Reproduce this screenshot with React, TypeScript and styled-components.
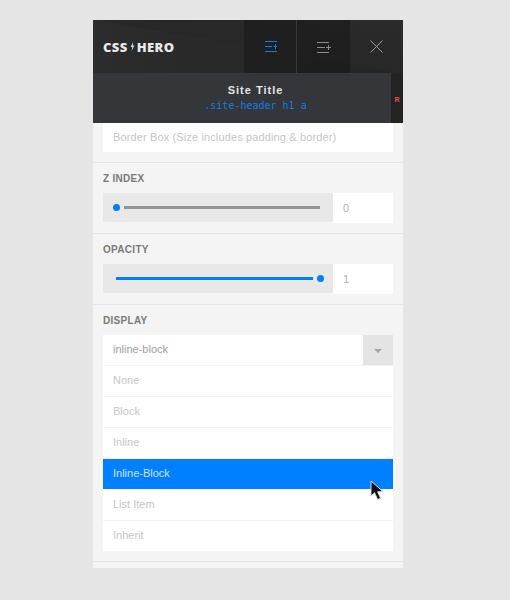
import React from 'react';
import styled, { createGlobalStyle } from 'styled-components';

const GlobalStyle = createGlobalStyle`
  html, body {
    margin: 0;
    padding: 0;
    background: #e5e5e5;
  }
  body {
    font-family: "Liberation Sans", Arial, sans-serif;
  }
`;

const Page = styled.div`
  padding: 20px 0 32px 93px;
`;

const Panel = styled.div`
  position: relative;
  width: 310px;
  height: 548px;
  background: #f4f4f4;
  overflow: hidden;
`;

const TopBar = styled.div`
  display: flex;
  height: 53px;
  background:
    linear-gradient(190deg, #2b2b2b 0%, #272727 50%, transparent 50%),
    linear-gradient(90deg, #2c2c2c 0%, #242424 100%);
`;

const Logo = styled.div`
  display: flex;
  align-items: center;
  gap: 2px;
  width: 151px;
  padding: 0 0 0 10px;
  box-sizing: border-box;
  color: #e8e8e8;
  font-family: "Open Sans", sans-serif;
  font-size: 13px;
  font-weight: 800;
  letter-spacing: 0.4px;
`;

const ToolButton = styled.div<{ $dark?: boolean; $line?: boolean }>`
  display: flex;
  align-items: center;
  justify-content: center;
  box-sizing: border-box;
  width: 53px;
  height: 53px;
  background: ${p => (p.$dark ? 'rgba(20, 20, 20, 0.45)' : 'transparent')};
  border-right: ${p => (p.$line ? '1px solid #383838' : 'none')};
`;

const SubBar = styled.div`
  display: flex;
  height: 50px;
`;

const Selection = styled.div`
  display: flex;
  flex-direction: column;
  align-items: center;
  justify-content: center;
  box-sizing: border-box;
  width: 298px;
  padding-left: 27px;
  background: #35363a;
`;

const SelectionTitle = styled.div`
  color: #e4e4e4;
  font-size: 11px;
  font-weight: 700;
  letter-spacing: 1px;
  line-height: 15px;
`;

const SelectionPath = styled.div`
  color: #0a7ee8;
  font-family: "DejaVu Sans Mono", monospace;
  font-size: 10px;
  line-height: 15px;
`;

const ResponsiveTab = styled.div`
  flex: 1;
  display: flex;
  align-items: center;
  justify-content: center;
  background: #232323;
  color: #f0503c;
  font-size: 7px;
  font-weight: 700;
  padding-top: 2px;
`;

const Section = styled.div`
  padding: 0 10px 10px;
  border-bottom: 1px solid #e6e6e6;
`;

const TopSection = styled(Section)`
  height: 29px;
`;

const Block = styled(Section)`
  padding-top: 10px;
`;

const Label = styled.div`
  color: #7a7a7a;
  font-size: 10px;
  font-weight: 700;
  letter-spacing: 0.3px;
  line-height: 11px;
  margin-bottom: 9px;
`;

const WhiteBox = styled.div`
  display: flex;
  align-items: center;
  box-sizing: border-box;
  height: 29px;
  padding: 0 0 2px 10px;
  background: #fff;
  color: #c6c6c6;
  font-size: 11px;
  letter-spacing: 0.13px;
`;

const SliderRow = styled.div`
  display: flex;
  align-items: flex-start;
  height: 30px;
`;

const SliderTrack = styled.div<{ $active?: boolean }>`
  display: flex;
  align-items: center;
  gap: 4px;
  width: 230px;
  height: 29px;
  padding: ${p => (p.$active ? '0 9px 0 13px' : '0 13px 0 10px')};
  box-sizing: border-box;
  background: #e8e8e8;
`;

const SliderLine = styled.div<{ $active?: boolean }>`
  flex: 1;
  height: 3px;
  background: ${p => (p.$active ? '#007fff' : '#949494')};
`;

const Knob = styled.div`
  flex: none;
  width: 7px;
  height: 7px;
  border-radius: 50%;
  background: #007fff;
`;

const NumberBox = styled.div`
  display: flex;
  align-items: center;
  width: 60px;
  height: 30px;
  padding: 0 0 1px 10px;
  box-sizing: border-box;
  background: #fff;
  color: #b0b0b0;
  font-size: 11px;
`;

const SelectBox = styled.div`
  display: flex;
  height: 30px;
  background: #fff;
  border-bottom: 1px solid #f3f3f3;
`;

const SelectValue = styled.div`
  flex: 1;
  display: flex;
  align-items: center;
  padding: 0 0 2px 10px;
  color: #a0a0a0;
  font-size: 11px;
`;

const SelectArrow = styled.div`
  display: flex;
  align-items: center;
  justify-content: center;
  width: 30px;
  background: #e4e4e4;

  &::after {
    content: "";
    margin-top: 1px;
    border-left: 4px solid transparent;
    border-right: 4px solid transparent;
    border-top: 4px solid #a5a5a5;
  }
`;

const Option = styled.div<{ $selected?: boolean }>`
  display: flex;
  align-items: center;
  box-sizing: border-box;
  height: 31px;
  padding: 0 0 2px 10px;
  background: ${p => (p.$selected ? '#007fff' : '#fff')};
  background-clip: padding-box;
  color: ${p => (p.$selected ? '#cfe6ff' : '#c6c6c6')};
  border-bottom: 1px solid ${p => (p.$selected ? '#fff' : '#f3f3f3')};
  font-size: 11px;

  &:last-child {
    height: 30px;
    border-bottom: none;
  }
`;

const Cursor = styled.svg`
  position: absolute;
  left: 277px;
  top: 460px;
`;

const options = ['None', 'Block', 'Inline', 'Inline-Block', 'List Item', 'Inherit'];

const App = () => {
  return (
    <Page>
      <GlobalStyle />
      <Panel>
        <TopBar>
          <Logo>
            CSS
            <svg width="5" height="9" viewBox="0 0 5 9">
              <path d="M3.2 0 L0.6 5 H2.2 L1.6 9 L4.4 3.6 H2.8 Z" fill="#d8d8d8" />
            </svg>
            HERO
          </Logo>
          <ToolButton $dark $line>
            <svg width="14" height="11" viewBox="0 0 14 11" fill="none" stroke="#0a7ee8">
              <path d="M2 0.5H14M2 5.5H9M2 10.5H14" />
              <path d="M12.5 3V8.5M10.5 5.5H14" />
            </svg>
          </ToolButton>
          <ToolButton $dark>
            <svg width="15" height="13" viewBox="0 0 15 13" fill="none" stroke="#8c8c8c">
              <path d="M1 2.5H13M1 7.5H9M1 12.5H13" />
              <path d="M10 7.5H15M12.5 5V10" />
            </svg>
          </ToolButton>
          <ToolButton>
            <svg width="13" height="13" viewBox="0 0 13 13" fill="none" stroke="#9a9a9a">
              <path d="M0.5 0.5L12.5 12.5M12.5 0.5L0.5 12.5" />
            </svg>
          </ToolButton>
        </TopBar>
        <SubBar>
          <Selection>
            <SelectionTitle>Site Title</SelectionTitle>
            <SelectionPath>.site-header h1 a</SelectionPath>
          </Selection>
          <ResponsiveTab>R</ResponsiveTab>
        </SubBar>
        <TopSection>
          <WhiteBox>Border Box (Size includes padding &amp; border)</WhiteBox>
        </TopSection>
        <Block>
          <Label>Z INDEX</Label>
          <SliderRow>
            <SliderTrack>
              <Knob />
              <SliderLine />
            </SliderTrack>
            <NumberBox>0</NumberBox>
          </SliderRow>
        </Block>
        <Block>
          <Label>OPACITY</Label>
          <SliderRow>
            <SliderTrack $active>
              <SliderLine $active />
              <Knob />
            </SliderTrack>
            <NumberBox>1</NumberBox>
          </SliderRow>
        </Block>
        <Block>
          <Label>DISPLAY</Label>
          <SelectBox>
            <SelectValue>inline-block</SelectValue>
            <SelectArrow />
          </SelectBox>
          {options.map(option => (
            <Option key={option} $selected={option === 'Inline-Block'}>
              {option}
            </Option>
          ))}
        </Block>
        <Cursor width="15" height="21" viewBox="0 0 15 21">
          <path
            d="M1 1 V16 L4.6 12.8 L7.6 19.6 L10.6 18.2 L7.6 11.8 L13 11.6 Z"
            fill="#111"
            stroke="#d8d8d8"
            strokeWidth="1"
          />
        </Cursor>
      </Panel>
    </Page>
  );
};

export default App;
